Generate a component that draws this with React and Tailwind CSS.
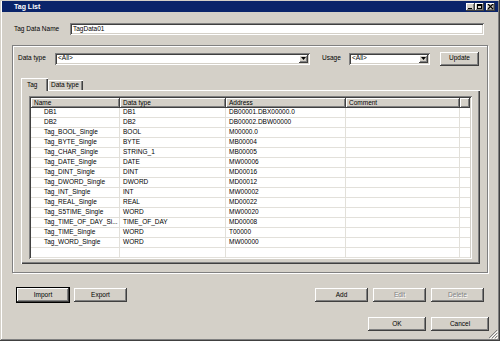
import React from 'react';

const ROWS = [
  ['DB1', 'DB1', 'DB00001.DBX00000.0'],
  ['DB2', 'DB2', 'DB00002.DBW00000'],
  ['Tag_BOOL_Single', 'BOOL', 'M00000.0'],
  ['Tag_BYTE_Single', 'BYTE', 'MB00004'],
  ['Tag_CHAR_Single', 'STRING_1', 'MB00005'],
  ['Tag_DATE_Single', 'DATE', 'MW00006'],
  ['Tag_DINT_Single', 'DINT', 'MD00016'],
  ['Tag_DWORD_Single', 'DWORD', 'MD00012'],
  ['Tag_INT_Single', 'INT', 'MW00002'],
  ['Tag_REAL_Single', 'REAL', 'MD00022'],
  ['Tag_S5TIME_Single', 'WORD', 'MW00020'],
  ['Tag_TIME_OF_DAY_Si...', 'TIME_OF_DAY', 'MD00008'],
  ['Tag_TIME_Single', 'WORD', 'T00000'],
  ['Tag_WORD_Single', 'WORD', 'MW00000'],
  ['', '', ''],
];

const RAISED = 'bg-[#d4d0c8] shadow-[inset_-1px_-1px_#404040,inset_1px_1px_#fff,inset_-2px_-2px_#808080]';
const SUNKEN = 'bg-white shadow-[inset_1px_1px_#808080,inset_-1px_-1px_#fff,inset_2px_2px_#404040,inset_-2px_-2px_#d4d0c8]';

function Btn({ w, children, disabled, isDefault }) {
  return (
    <div
      className={[
        'h-[14px] flex items-center justify-center',
        w,
        RAISED,
        isDefault ? 'outline outline-1 outline-black' : '',
        disabled ? 'text-[#808080] [text-shadow:1px_1px_0_#fff]' : '',
      ].join(' ')}
    >
      {children}
    </div>
  );
}

function Combo({ w, value }) {
  return (
    <div className={'h-[12px] flex items-center pl-[3px] pr-[2px] ' + w + ' ' + SUNKEN}>
      <span className="flex-1">{value}</span>
      <div className={'w-[9px] h-[8px] flex items-center justify-center ' + RAISED}>
        <svg width="5" height="3" viewBox="0 0 5 3"><path d="M0 0h5L2.5 3z" fill="#000" /></svg>
      </div>
    </div>
  );
}

function CaptionBtn({ children }) {
  return (
    <div className={'w-[9px] h-[8px] flex items-center justify-center ' + RAISED}>
      <svg width="7" height="6" viewBox="0 0 7 6">{children}</svg>
    </div>
  );
}

export default function App() {
  return (
    <div className="relative w-[500px] h-[341px] bg-[#d4d0c8] font-['Liberation_Sans',Arial,sans-serif] text-[6.5px] leading-none text-black flex flex-col px-[2px] pt-[1px] overflow-hidden shadow-[inset_-1px_-1px_#404040,inset_1px_1px_#d4d0c8,inset_-2px_-2px_#808080,inset_2px_2px_#fff]">
      {/* title bar */}
      <div className="h-[11px] bg-[#0a246a] flex items-center pl-[12px] pr-[3px]">
        <span className="flex-1 text-white font-bold text-[7px]">Tag List</span>
        <CaptionBtn><path d="M1 4h4v1H1z" fill="#000" /></CaptionBtn>
        <CaptionBtn><path d="M1 0h5v5H1zM2 2v2h3V2z" fill="#000" fillRule="evenodd" /></CaptionBtn>
        <div className="w-[2px]" />
        <CaptionBtn><path d="M1 0l5 5M6 0L1 5" stroke="#000" strokeWidth="1.2" /></CaptionBtn>
      </div>

      {/* tag data name */}
      <div className="mt-[11px] h-[12px] flex items-center pl-[12px] pr-[14px]">
        <span className="w-[56px]">Tag Data Name</span>
        <div className={'flex-1 h-[12px] flex items-center pl-[3px] ' + SUNKEN}>TagData01</div>
      </div>

      {/* group box */}
      <div className="mt-[10px] ml-[10px] w-[476px] h-[228px] border border-[#808080] shadow-[inset_1px_1px_#fff,1px_1px_#fff] flex flex-col">
        <div className="mt-[6px] h-[13px] flex items-center pl-[5px]">
          <span className="w-[37px]">Data type</span>
          <Combo w="w-[255px]" value="<All>" />
          <span className="ml-[12px] w-[27px]">Usage</span>
          <Combo w="w-[81px]" value="<All>" />
          <div className="ml-[10px]">
            <Btn w="w-[39px]">Update</Btn>
          </div>
        </div>

        {/* tabs */}
        <div className="ml-[8px] mt-[13px] flex flex-col">
          <div className="h-[12px] flex items-end">
            <div className="relative z-10 -mb-[1px] w-[27px] h-[13px] bg-[#d4d0c8] shadow-[inset_1px_1px_#fff,inset_-1px_0_#404040,inset_-2px_0_#808080] flex items-start pt-[4px] pl-[6px]">Tag</div>
            <div className="w-[35px] h-[10px] bg-[#d4d0c8] shadow-[inset_1px_1px_#fff,inset_-1px_0_#404040,inset_-2px_0_#808080] flex items-center pl-[3px]">Data type</div>
          </div>
          <div className="w-[459px] h-[174px] bg-[#d4d0c8] shadow-[inset_1px_1px_#fff,inset_-1px_-1px_#404040,inset_-2px_-2px_#808080] flex flex-col">
            <div className={'ml-[8px] mt-[6px] w-[443px] h-[163px] p-[2px] flex flex-col ' + SUNKEN}>
              <div className="h-[10px] flex shrink-0">
                {[
                  ['Name', 'w-[89px]'],
                  ['Data type', 'w-[106px]'],
                  ['Address', 'w-[120px]'],
                  ['Comment', 'w-[114px]'],
                  ['', 'flex-1'],
                ].map(([label, w], i) => (
                  <div key={i} className={'h-[10px] flex items-center pl-[3px] ' + w + ' ' + RAISED}>{label}</div>
                ))}
              </div>
              {ROWS.map((r, i) => (
                <div key={i} className="h-[10px] flex shrink-0 border-b border-[#e2e0da]">
                  <div className="w-[89px] pl-[13px] flex items-center whitespace-nowrap overflow-hidden border-r border-[#e2e0da]">{r[0]}</div>
                  <div className="w-[106px] pl-[3px] flex items-center border-r border-[#e2e0da]">{r[1]}</div>
                  <div className="w-[120px] pl-[3px] flex items-center border-r border-[#e2e0da]">{r[2]}</div>
                  <div className="w-[114px] border-r border-[#e2e0da]" />
                  <div className="flex-1" />
                </div>
              ))}
            </div>
          </div>
        </div>
      </div>

      {/* bottom buttons */}
      <div className="mt-[15px] flex pl-[15px]">
        <Btn w="w-[52px]" isDefault>Import</Btn>
        <div className="ml-[5px]"><Btn w="w-[53px]">Export</Btn></div>
        <div className="ml-[188px]"><Btn w="w-[53px]">Add</Btn></div>
        <div className="ml-[5px]"><Btn w="w-[53px]" disabled>Edit</Btn></div>
        <div className="ml-[5px]"><Btn w="w-[53px]" disabled>Delete</Btn></div>
      </div>
      <div className="mt-[15px] flex pl-[366px]">
        <Btn w="w-[58px]">OK</Btn>
        <div className="ml-[5px]"><Btn w="w-[58px]">Cancel</Btn></div>
      </div>

      {/* size grip */}
      <svg className="absolute right-[2px] bottom-[2px]" width="10" height="10" viewBox="0 0 10 10">
        <path d="M9 1L1 9M9 4L4 9M9 7L7 9" stroke="#808080" strokeWidth="1" />
        <path d="M10 2L2 10M10 5L5 10M10 8L8 10" stroke="#fff" strokeWidth="1" />
      </svg>
    </div>
  );
}
